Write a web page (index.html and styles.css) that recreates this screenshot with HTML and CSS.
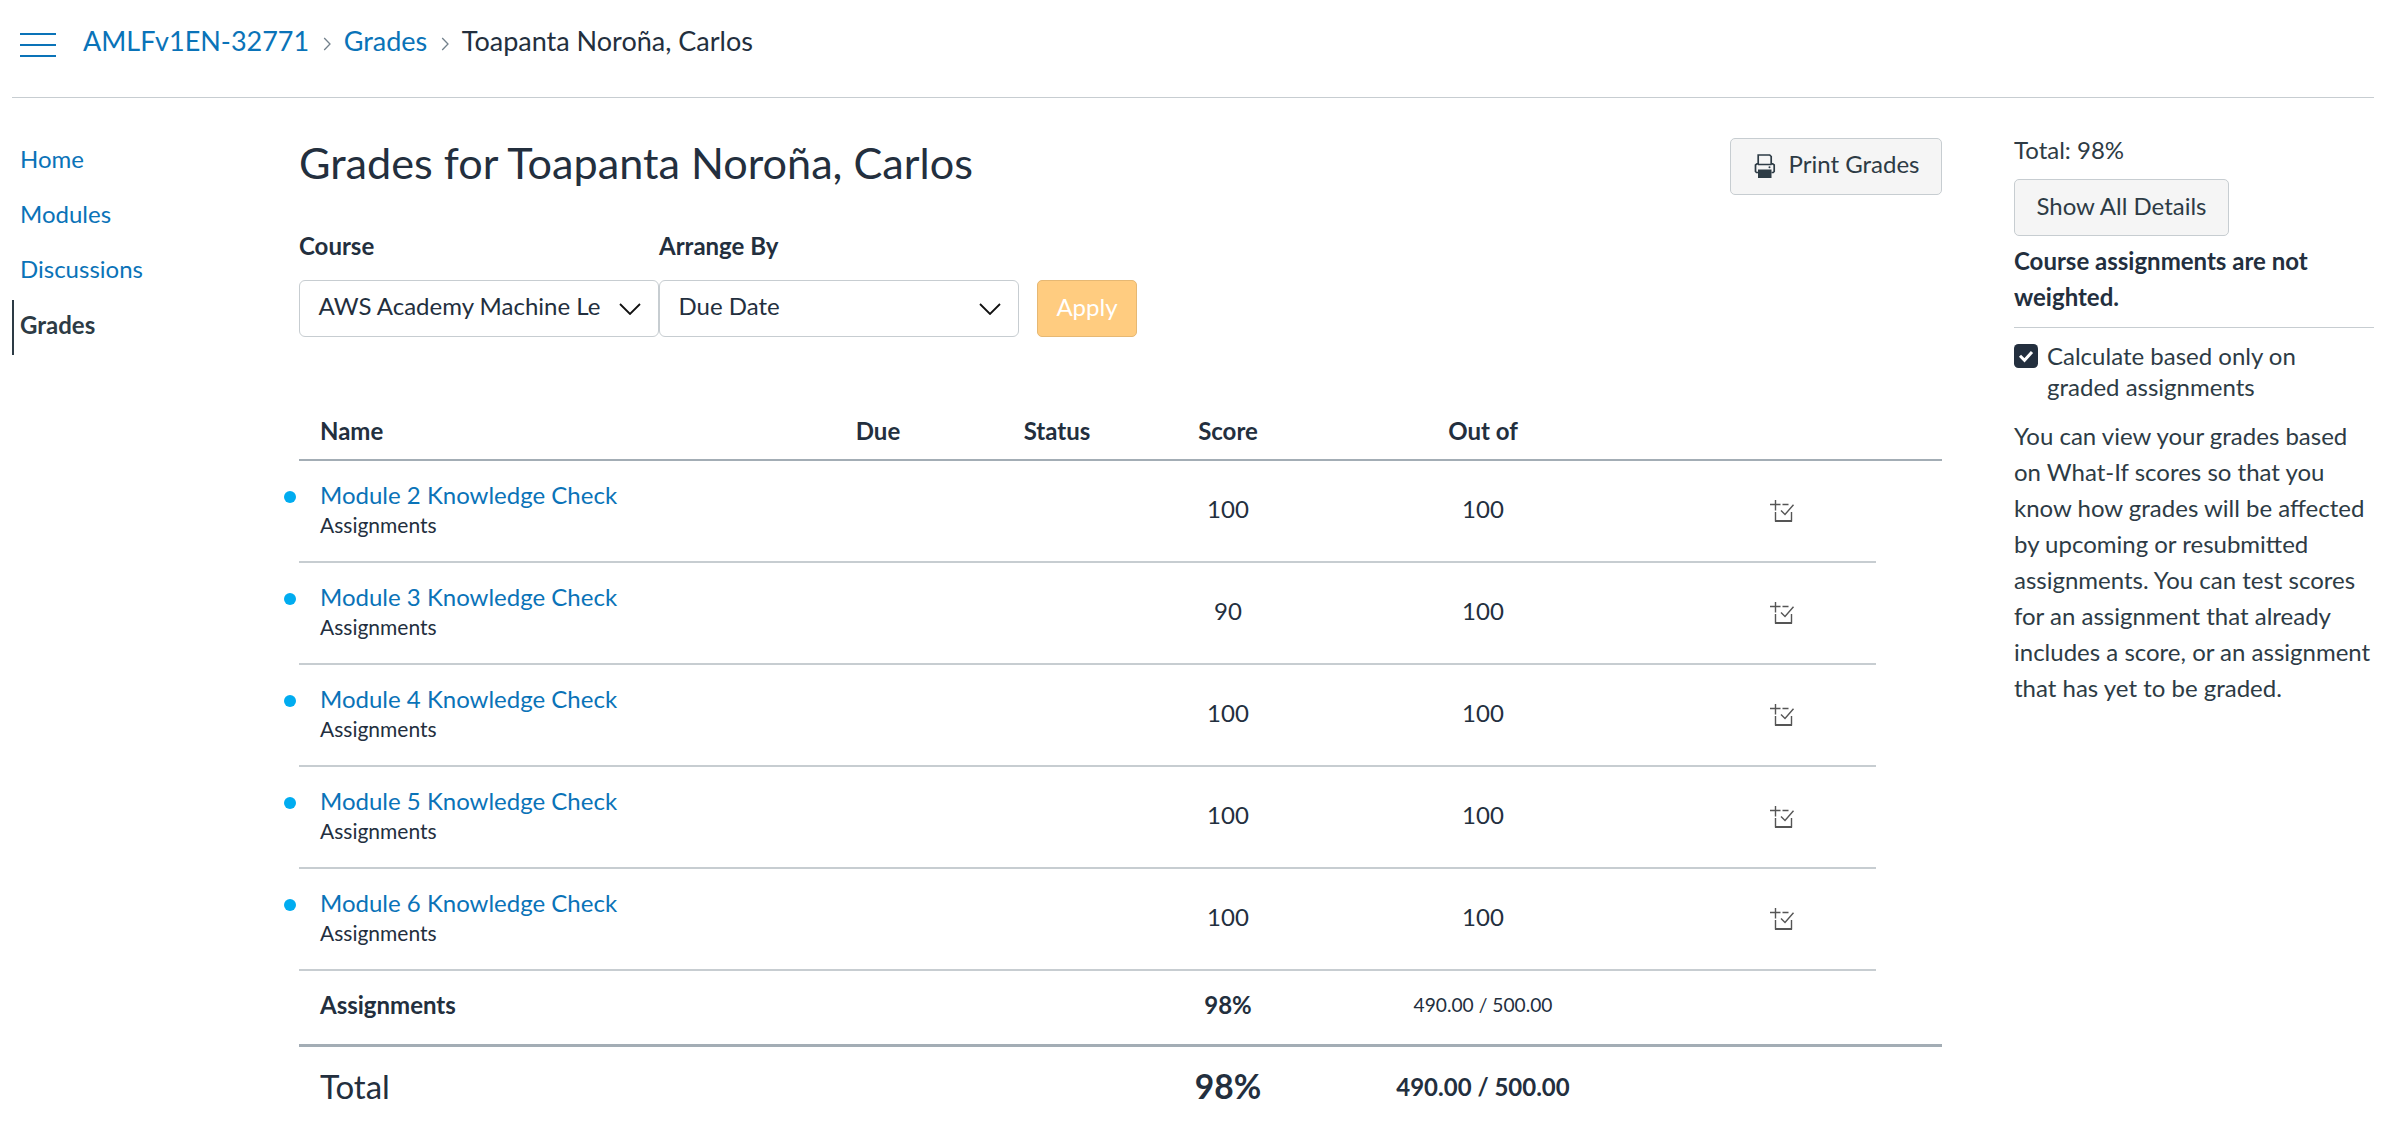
FILE: index.html
```html
<!DOCTYPE html>
<html lang="en">
<head>
<meta charset="utf-8">
<title>Grades for Toapanta Noroña, Carlos</title>
<link rel="stylesheet" href="styles.css">
</head>
<body>
<svg class="defs" aria-hidden="true">
  <symbol id="rubric" viewBox="0 0 26 26">
    <path d="M6.5 1v10.5M1 5.5h10.500M13.500 5.500h6M6.500 13v9.500M22.500 13v9.500" />
    <path d="M6 22h17" stroke-width="2"/>
    <path d="M12 11.500l4 4 8.500-9.800"/>
  </symbol>
</svg>
<header class="topbar">
  <button class="menu" aria-label="Menu"><span></span><span></span><span></span></button>
  <nav class="crumbs">
    <a href="#">AMLFv1EN-32771</a>
    <svg class="sep" viewBox="0 0 8 14"><path d="M1.200 1l5.800 6-5.800 6"/></svg>
    <a href="#">Grades</a>
    <svg class="sep" viewBox="0 0 8 14"><path d="M1.200 1l5.800 6-5.800 6"/></svg>
    <span>Toapanta Noroña, Carlos</span>
  </nav>
</header>
<div class="layout">
  <nav class="side">
    <a href="#">Home</a>
    <a href="#">Modules</a>
    <a href="#">Discussions</a>
    <a href="#" class="active">Grades</a>
  </nav>
  <main class="main">
    <div class="title-row">
      <h1>Grades for Toapanta Noroña, Carlos</h1>
      <button class="btn print">
        <svg viewBox="0 0 22 24"><path d="M4.200 10.500V1h11.500l1.500 1.500v8M4 18.500H2.500L1.500 17.500V11l1.500-1.200h1.200M17.200 9.800h1.500l1.500 1.200v6.500l-1 1H17.500M4 10.500h13.500" fill="none" stroke="#2d3b45" stroke-width="1.700"/><path d="M4 15.500h13.500V24H4z" fill="#2d3b45"/><circle cx="15.500" cy="13.300" r="1" fill="#2d3b45"/></svg>
        <span>Print Grades</span>
      </button>
    </div>
    <div class="filters">
      <div class="field">
        <label>Course</label>
        <div class="select"><span>AWS Academy Machine Le</span><svg viewBox="0 0 22 12"><path d="M1 1l10 10L21 1"/></svg></div>
      </div>
      <div class="field">
        <label>Arrange By</label>
        <div class="select"><span>Due Date</span><svg viewBox="0 0 22 12"><path d="M1 1l10 10L21 1"/></svg></div>
      </div>
      <button class="btn apply">Apply</button>
    </div>
    <table class="grades">
      <colgroup><col class="c-name"><col class="c-due"><col class="c-status"><col class="c-score"><col class="c-out"><col class="c-details"><col class="c-end"></colgroup>
      <thead>
        <tr><th class="name">Name</th><th>Due</th><th>Status</th><th>Score</th><th>Out of</th><th></th><th></th></tr>
      </thead>
      <tbody>
        <tr class="item"><td class="name"><i class="dot"></i><a href="#">Module 2 Knowledge Check</a><small>Assignments</small></td><td></td><td></td><td>100</td><td>100</td><td class="icon"><svg><use href="#rubric"/></svg></td></tr>
        <tr class="item"><td class="name"><i class="dot"></i><a href="#">Module 3 Knowledge Check</a><small>Assignments</small></td><td></td><td></td><td>90</td><td>100</td><td class="icon"><svg><use href="#rubric"/></svg></td></tr>
        <tr class="item"><td class="name"><i class="dot"></i><a href="#">Module 4 Knowledge Check</a><small>Assignments</small></td><td></td><td></td><td>100</td><td>100</td><td class="icon"><svg><use href="#rubric"/></svg></td></tr>
        <tr class="item"><td class="name"><i class="dot"></i><a href="#">Module 5 Knowledge Check</a><small>Assignments</small></td><td></td><td></td><td>100</td><td>100</td><td class="icon"><svg><use href="#rubric"/></svg></td></tr>
        <tr class="item"><td class="name"><i class="dot"></i><a href="#">Module 6 Knowledge Check</a><small>Assignments</small></td><td></td><td></td><td>100</td><td>100</td><td class="icon"><svg><use href="#rubric"/></svg></td></tr>
        <tr class="group"><th class="name">Assignments</th><td></td><td></td><td class="pct">98%</td><td class="points">490.00 / 500.00</td><td></td><td></td></tr>
        <tr class="total"><th class="name">Total</th><td></td><td></td><td class="pct">98%</td><td class="points">490.00 / 500.00</td><td></td><td></td></tr>
      </tbody>
    </table>
  </main>
  <aside class="aside">
    <div class="sum">Total: 98%</div>
    <button class="btn details">Show All Details</button>
    <p class="note">Course assignments are not weighted.</p>
    <label class="check">
      <svg viewBox="0 0 24 24"><rect width="24" height="24" rx="4.500" fill="#232f3e"/><path d="M6 11.800l4.500 4.500 7.500-8.300" fill="none" stroke="#fff" stroke-width="3"/></svg>
      <span>Calculate based only on graded assignments</span>
    </label>
    <p class="help">You can view your grades based on What-If scores so that you know how grades will be affected by upcoming or resubmitted assignments. You can test scores for an assignment that already includes a score, or an assignment that has yet to be graded.</p>
  </aside>
</div>
</body>
</html>
```
FILE: styles.css
```css
* { box-sizing: border-box; }
body {
  margin: 0;
  padding: 0 24px 0 12px;
  background: #fff;
  color: #232f3e;
  font: 24px/36px Lato, sans-serif;
  overflow: hidden;
}
a { color: #0a73b8; text-decoration: none; }
h1, p { margin: 0; font-weight: 400; }
button { font: inherit; color: inherit; }
.defs { display: none; }

.topbar {
  display: flex;
  align-items: flex-start;
  height: 98px;
  padding-left: 8px;
  border-bottom: 1px solid #c7cdd1;
}
.menu {
  display: flex;
  flex-direction: column;
  gap: 9px;
  width: 36px;
  margin: 33px 27px 0 0;
  padding: 0;
  border: 0;
  background: none;
}
.menu span { height: 2px; background: #0a73b8; }
.crumbs {
  display: flex;
  align-items: center;
  margin-top: 23px;
  font-size: 27px;
}
.sep {
  width: 8px;
  height: 14px;
  margin: 5px 12.5px 0 14px;
  fill: none;
  stroke: #73818c;
  stroke-width: 1.3;
}

.layout { display: flex; align-items: flex-start; }
.side { width: 287px; padding-top: 37px; }
.side a {
  display: block;
  height: 55px;
  padding-left: 8px;
  line-height: 47px;
}
.side .active {
  border-left: 2px solid #2d3b45;
  padding-left: 6px;
  color: #2d3b45;
  font-weight: 700;
  line-height: 50px;
}

.main { width: 1643px; padding-top: 40px; }
.title-row { display: flex; justify-content: space-between; height: 90px; }
h1 { font-size: 43.2px; line-height: 48px; }
.btn {
  height: 57px;
  padding: 0 0 3px;
  border: 1px solid #c7cdd1;
  border-radius: 5px;
  background: #f5f5f5;
  color: #2d3b45;
  line-height: 50px;
}
.print { display: flex; width: 212px; padding: 0 0 0 23px; }
.print svg { width: 22px; height: 24px; margin: 15px 12.5px 0 0; }
.filters { display: flex; align-items: flex-end; height: 109px; }
.field { width: 360px; }
.field label { display: block; height: 52px; font-weight: 700; }
.select {
  display: flex;
  align-items: center;
  justify-content: space-between;
  height: 57px;
  padding: 0 17.5px 5px 18.5px;
  border: 1px solid #c7cdd1;
  border-radius: 6px;
}
.select span { white-space: nowrap; }
.select svg { width: 22px; height: 12px; margin-top: 6px; fill: none; stroke: #111; stroke-width: 1.8; }
.apply {
  width: 100px;
  margin-left: 18px;
  border-color: #e6b873;
  background: #ffcc80;
  color: #fff;
}

.grades {
  width: 1643px;
  margin-top: 66px;
  table-layout: fixed;
  border-spacing: 0;
  text-align: center;
}
.c-name { width: 480px; }
.c-due { width: 198px; }
.c-status { width: 160px; }
.c-score { width: 182px; }
.c-out { width: 328px; }
.c-details { width: 229px; }
.c-end { width: 66px; }
.grades th, .grades td { padding: 0; }
.grades thead th { height: 58px; padding-bottom: 1px; border-bottom: 2px solid #a3adb5; }
.grades .name { padding-left: 21px; text-align: left; }
.item td { height: 102px; border-bottom: 2px solid #c7cdd1; }
.grades .item td { padding-bottom: 4px; }
.grades .item .name { position: relative; padding-bottom: 2px; }
.item .name a { display: block; margin-top: -2px; line-height: 30px; }
.item small { display: block; margin-bottom: -1px; font-size: 21px; line-height: 30px; }
.dot {
  position: absolute;
  left: -15px;
  top: 30px;
  width: 12px;
  height: 12px;
  border-radius: 50%;
  background: #00acf0;
}
.grades .icon { padding-left: 41px; }
.icon svg { display: block; width: 26px; height: 26px; margin: 5px auto 0; fill: none; stroke: #555; stroke-width: 1.4; }
.group th, .group td { height: 76px; border-bottom: 3px solid #a3adb5; }
.grades .group th, .grades .group td { padding-bottom: 5px; }
.group .pct, .total .pct, .total .points { font-weight: 700; }
.group .points { font-size: 19.2px; }
.total th, .total td { height: 80px; }
.total th { font-size: 33px; font-weight: 400; }
.grades .total th, .grades .total .pct { padding-bottom: 2px; }
.total .pct { font-size: 33.6px; }

.aside { width: 360px; margin-left: 72px; padding-top: 34px; color: #2d3b45; }
.sum { height: 47px; }
.details { width: 215px; }
.note {
  height: 92px;
  padding-top: 7px;
  border-bottom: 1px solid #c7cdd1;
  color: #232f3e;
  font-weight: 700;
}
.check { display: flex; gap: 9px; padding-top: 12px; line-height: 31px; }
.check svg { flex: none; width: 24px; height: 24px; margin-top: 4px; }
.help { margin-top: 16px; }
```
